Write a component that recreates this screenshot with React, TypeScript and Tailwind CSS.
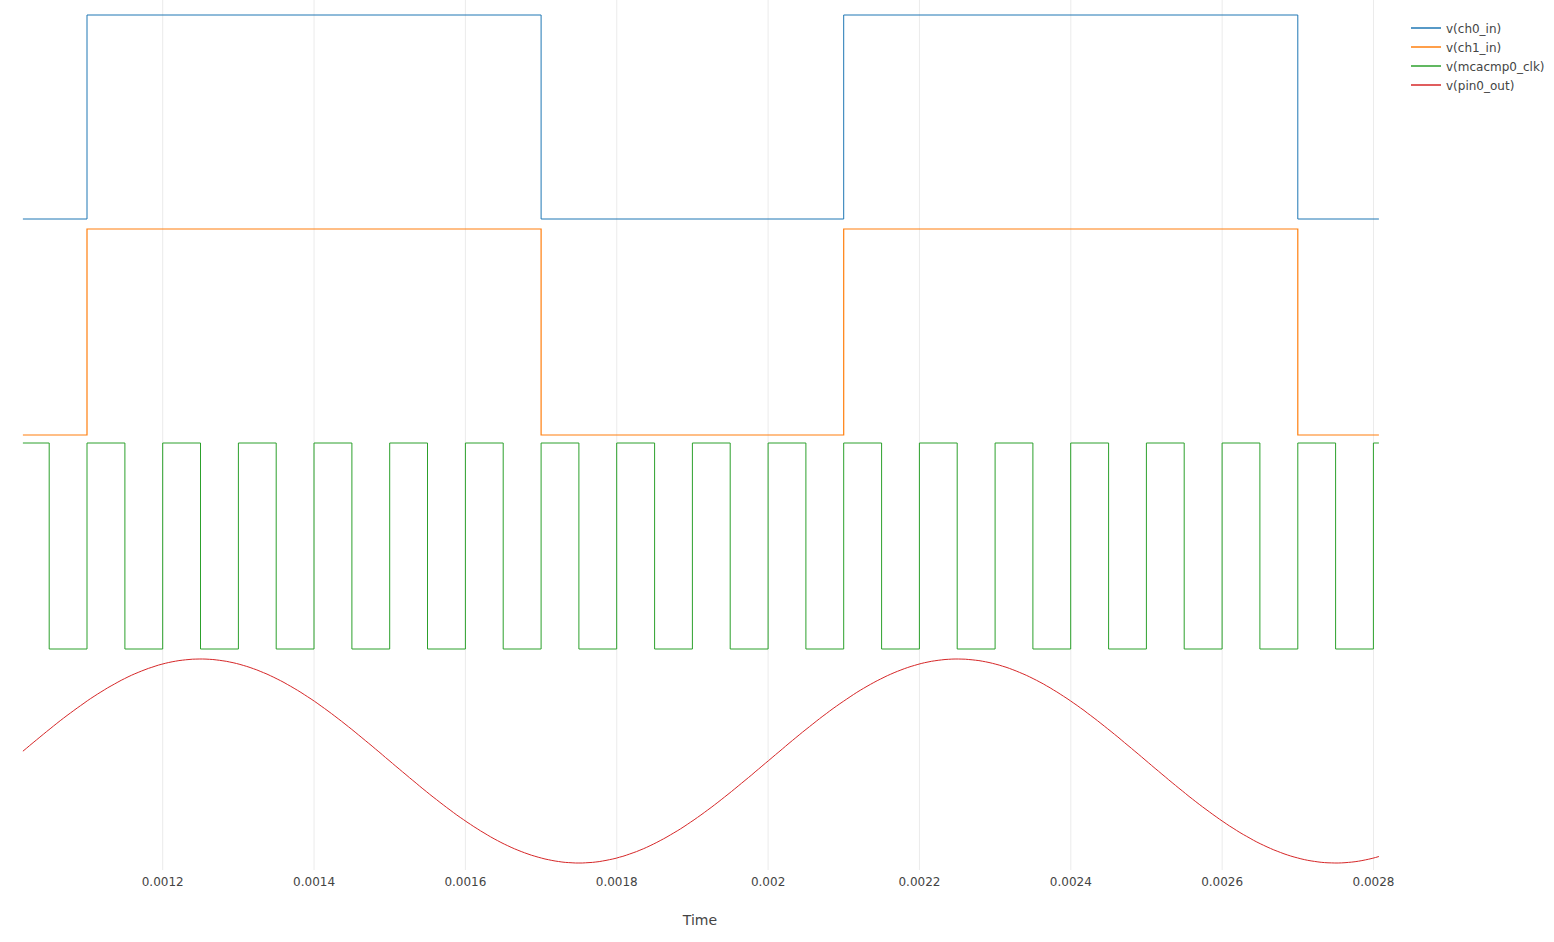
import React from "react";

const X = (t: number) => 162.7 + (t - 0.0012) * 756700;
const T0 = 0.0010153, T1 = 0.0028072;

function square(hiY: number, loY: number, period: number, start: number, dur: number) {
  const edges: number[] = [];
  let k = Math.floor((T0 - start) / period) - 1;
  for (; start + k * period < T1 + period; k++) {
    edges.push(start + k * period, start + k * period + dur);
  }
  const isHigh = (t: number) => {
    const m = (((t - start) % period) + period) % period;
    return m < dur;
  };
  let y = isHigh(T0) ? hiY : loY;
  let d = `M${X(T0).toFixed(1)},${y}`;
  for (const e of edges) {
    if (e <= T0 || e >= T1) continue;
    const nx = X(e).toFixed(1);
    const ny = isHigh(e + 1e-9) ? hiY : loY;
    d += ` L${nx},${y} L${nx},${ny}`;
    y = ny;
  }
  d += ` L${X(T1).toFixed(1)},${y}`;
  return d;
}

function sine() {
  let d = "";
  for (let i = 0; i <= 400; i++) {
    const t = T0 + ((T1 - T0) * i) / 400;
    const y = 761 - 102 * Math.sin((2 * Math.PI * (t - 0.001)) / 0.001);
    d += `${i ? "L" : "M"}${X(t).toFixed(1)},${y.toFixed(1)} `;
  }
  return d;
}

const ticks = ["0.0012", "0.0014", "0.0016", "0.0018", "0.002", "0.0022", "0.0024", "0.0026", "0.0028"];
const legend = [
  ["#1f77b4", "v(ch0_in)"],
  ["#ff7f0e", "v(ch1_in)"],
  ["#2ca02c", "v(mcacmp0_clk)"],
  ["#d62728", "v(pin0_out)"],
];

export default function App() {
  return (
    <div className="w-[1554px] h-[942px] bg-white" style={{ fontFamily: '"DejaVu Sans", sans-serif' }}>
      <svg width="1554" height="942" className="block">
        {ticks.map((l, i) => {
          const x = 162.7 + i * 151.35;
          return (
            <g key={l}>
              <line x1={x} x2={x} y1={0} y2={870} stroke="#ebebeb" strokeWidth={1} />
              <text x={x} y={886} textAnchor="middle" fontSize="12" fill="#444">{l}</text>
            </g>
          );
        })}
        <path d={square(15, 219, 0.001, 0.0011, 0.0006)} fill="none" stroke="#1f77b4" strokeWidth={1} />
        <path d={square(229, 435, 0.001, 0.0011, 0.0006)} fill="none" stroke="#ff7f0e" strokeWidth={1.2} />
        <path d={square(443, 649, 0.0001, 0.0011, 0.00005)} fill="none" stroke="#2ca02c" strokeWidth={1} />
        <path d={sine()} fill="none" stroke="#d62728" strokeWidth={1} />
        <text x={700} y={925} textAnchor="middle" fontSize="14" fill="#444">Time</text>
        {legend.map(([c, l], i) => (
          <g key={l}>
            <line x1={1411} x2={1441} y1={28 + i * 19} y2={28 + i * 19} stroke={c} strokeWidth={1.5} />
            <text x={1446} y={33 + i * 19} fontSize="12" fill="#444">{l}</text>
          </g>
        ))}
      </svg>
    </div>
  );
}
